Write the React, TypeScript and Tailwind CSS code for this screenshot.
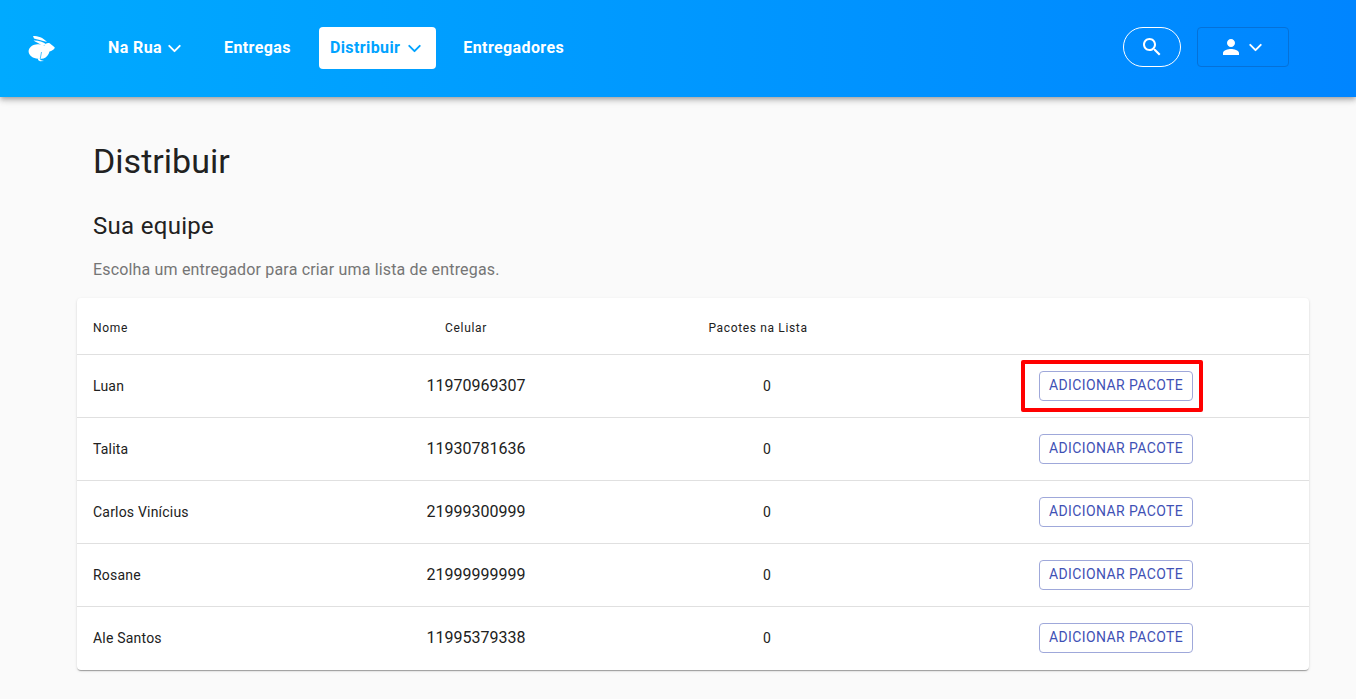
import { ChevronDown } from "lucide-react";

const team = [
  { name: "Luan", phone: "11970969307", highlighted: true },
  { name: "Talita", phone: "11930781636" },
  { name: "Carlos Vinícius", phone: "21999300999" },
  { name: "Rosane", phone: "21999999999" },
  { name: "Ale Santos", phone: "11995379338" },
];

const gridCols = "grid grid-cols-[264px_250px_332px_386px] items-center";

function RabbitLogo() {
  return (
    <svg viewBox="0 0 27 26" className="w-[27px] h-[26px] block mt-[9px]" fill="#fff">
      <path d="M5 0 C10 0 15 1.5 19 6 C14 4.5 9 3.2 6 2.5Z" />
      <path d="M5.5 4.5 C10 4.3 15 5.5 18.5 8.5 L14 9.5 C11 7.5 8 6 5.5 4.5Z" />
      <path d="M8 8.5 C11 8 14 8.5 16.5 9.5 C17 7.5 20 6.5 22 7.5 C23.5 9 25.5 10 26.8 11.5 C26.5 13.5 23.5 15 21.5 15.5 C20.8 18.5 18.5 21.5 15.5 22.5 C13 23 11.5 23 10 22.8 C5 22.5 0.8 19.5 0.6 15.5 C0.6 12 3.5 9 8 8.5Z" />
      <path d="M12.5 20 L12.3 24 L16 25 L12 25.2 L10 24 L10.5 21Z" />
      <path d="M13.5 16 L12.2 23" stroke="#00a8ff" strokeWidth={0.7} fill="none" />
    </svg>
  );
}

function NavItem({ label, caret, active }: { label: string; caret?: boolean; active?: boolean }) {
  return (
    <div
      className={
        active
          ? "flex items-center h-[42px] pl-[11px] pr-[10px] rounded-[4px] bg-white text-[#00a3ff] font-bold text-[16px] tracking-[0.4px]"
          : "flex items-center h-[42px] px-[11px] text-white font-bold text-[16px] tracking-[0.4px]"
      }
    >
      {label}
      {caret && (
        <ChevronDown
          className={active ? "w-[21px] h-[21px] ml-[3.5px] mr-[1.5px]" : "w-[21px] h-[21px] mx-[1.5px]"}
          strokeWidth={2.2}
        />
      )}
    </div>
  );
}

export default function App() {
  return (
    <div className="min-h-[699px] bg-[#fafafa] font-['Roboto',sans-serif] text-[#212121]">
      <header className="flex items-start h-[97px] pt-[27px] pl-[28px] pr-[67px] bg-gradient-to-r from-[#00aaff] to-[#0085ff] shadow-[0_2px_4px_-1px_rgba(0,0,0,0.2),0_4px_5px_0_rgba(0,0,0,0.14),0_1px_10px_0_rgba(0,0,0,0.12)]">
        <RabbitLogo />
        <nav className="flex items-center ml-[42px] gap-[16px]">
          <NavItem label="Na Rua" caret />
          <NavItem label="Entregas" />
          <div className="ml-[1px]">
            <NavItem label="Distribuir" caret active />
          </div>
          <NavItem label="Entregadores" />
        </nav>
        <div className="flex items-center ml-auto gap-[16px]">
          <button className="flex items-center justify-center w-[58px] h-[40px] rounded-[20px] border border-white text-white">
            <svg viewBox="0 0 24 24" className="w-[24px] h-[24px]" fill="currentColor">
              <path d="M15.5 14h-.79l-.28-.27C15.41 12.59 16 11.11 16 9.5 16 5.91 13.09 3 9.5 3S3 5.91 3 9.5 5.91 16 9.5 16c1.61 0 3.09-.59 4.23-1.57l.27.28v.79l5 4.99L20.49 19l-4.99-5zm-6 0C7.01 14 5 11.99 5 9.5S7.01 5 9.5 5 14 7.01 14 9.5 11.99 14 9.5 14z" />
            </svg>
          </button>
          <button className="flex items-center justify-center w-[92px] h-[40px] rounded-[4px] border border-[#0571d8] text-white">
            <svg viewBox="0 0 24 24" className="w-[24px] h-[24px]" fill="currentColor">
              <path d="M12 12c2.2 0 4-1.8 4-4s-1.8-4-4-4-4 1.8-4 4 1.8 4 4 4zm0 2c-2.7 0-8 1.3-8 4v2h16v-2c0-2.7-5.3-4-8-4z" />
            </svg>
            <ChevronDown className="w-[21px] h-[21px] mx-[1.5px]" strokeWidth={2.2} />
          </button>
        </div>
      </header>

      <main className="pl-[77px] pr-[47px]">
        <div className="pl-[16px]">
          <h1 className="mt-[41px] text-[34px] leading-[46px] font-normal">Distribuir</h1>
          <h2 className="mt-[26px] text-[24px] leading-[32px] tracking-[0.3px] font-normal">Sua equipe</h2>
          <p className="mt-[16px] text-[16px] leading-[24px] tracking-[0.17px] text-[#757575]">
            Escolha um entregador para criar uma lista de entregas.
          </p>
        </div>

        <div className="mt-[16px] w-[1232px] bg-white rounded-[4px] shadow-[0_2px_1px_-1px_rgba(0,0,0,0.2),0_1px_1px_0_rgba(0,0,0,0.14),0_1px_3px_0_rgba(0,0,0,0.12)]">
          <div className={`${gridCols} h-[57px] pt-[3px] border-b border-[#e0e0e0] text-[12px] tracking-[0.65px]`}>
            <div className="pl-[16px]">Nome</div>
            <div className="text-center">Celular</div>
            <div className="pl-[2px] text-center">Pacotes na Lista</div>
            <div />
          </div>
          {team.map((member, i) => (
            <div
              key={member.phone}
              className={`${gridCols} h-[63px] border-b ${i < team.length - 1 ? "border-[#e0e0e0]" : "border-transparent"}`}
            >
              <div className="pl-[16px] text-[14px] tracking-[0.2px]">{member.name}</div>
              <div className="pl-[20px] text-center text-[16px]">{member.phone}</div>
              <div className="pl-[20px] text-center text-[14px]">0</div>
              <div className="relative flex justify-center">
                <button className="h-[30px] w-[154px] pb-[2px] rounded-[4px] border border-[#9fa8da] text-[14px] tracking-[0.4px] text-[#3f51b5]">
                  ADICIONAR PACOTE
                </button>
                {member.highlighted && (
                  <div className="absolute left-[98px] -top-[11px] w-[182px] h-[52px] rounded-[2px] border-[4px] border-[#ff0000]" />
                )}
              </div>
            </div>
          ))}
        </div>
      </main>
    </div>
  );
}
